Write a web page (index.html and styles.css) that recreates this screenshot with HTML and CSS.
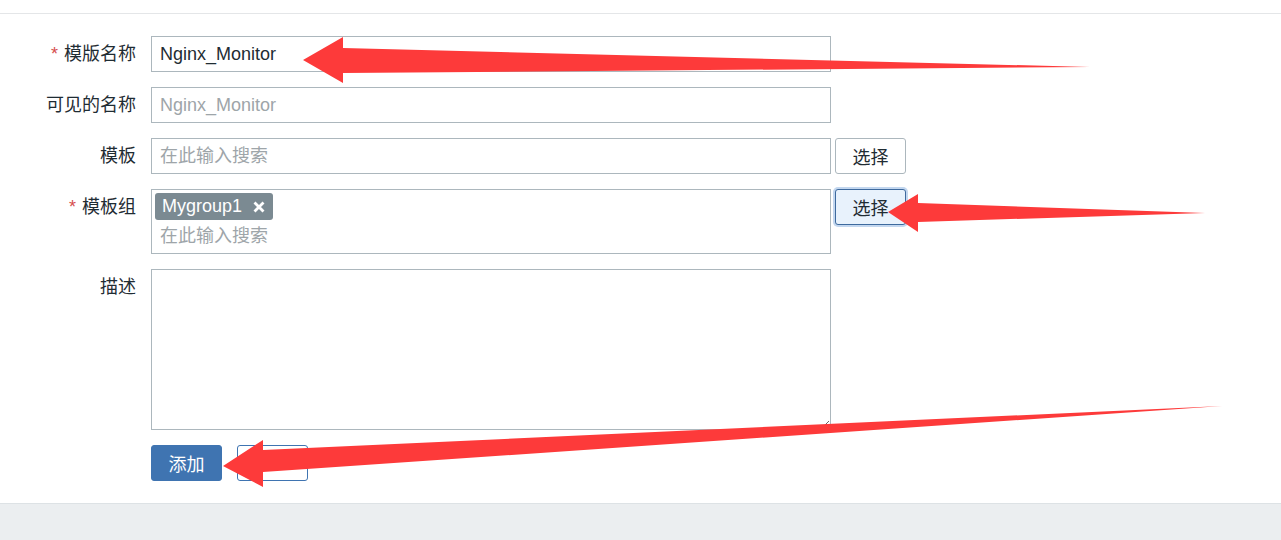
FILE: index.html
```html
<!DOCTYPE html>
<html lang="zh-CN">
<head>
    <meta charset="UTF-8">
    <title>模板</title>
    <link rel="stylesheet" href="styles.css">
</head>
<body>
    <div class="topbar"></div>
    <div class="panel">
        <form class="form">
            <label class="label" for="name"><span class="req">*</span>模版名称</label>
            <div class="field">
                <input type="text" id="name" class="input" value="Nginx_Monitor">
            </div>

            <label class="label" for="visible">可见的名称</label>
            <div class="field">
                <input type="text" id="visible" class="input" placeholder="Nginx_Monitor">
            </div>

            <label class="label" for="templates">模板</label>
            <div class="field">
                <input type="text" id="templates" class="input" placeholder="在此输入搜索">
                <button type="button" class="btn-alt">选择</button>
            </div>

            <label class="label" for="groups"><span class="req">*</span>模板组</label>
            <div class="field">
                <div class="multiselect">
                    <span class="tag">Mygroup1
                        <svg class="tag-x" width="12" height="12" viewBox="0 0 12 12">
                            <path d="M1.5 1.5 L10.5 10.5 M10.5 1.5 L1.5 10.5" />
                        </svg>
                    </span>
                    <input type="text" id="groups" class="ms-search" placeholder="在此输入搜索">
                </div>
                <button type="button" class="btn-alt focused">选择</button>
            </div>

            <label class="label" for="desc">描述</label>
            <div class="field">
                <textarea id="desc" class="textarea"></textarea>
            </div>

            <div></div>
            <div class="actions">
                <button type="button" class="btn-main">添加</button>
                <button type="button" class="btn-cancel"></button>
            </div>
        </form>
    </div>

    <!-- annotation arrows drawn over the screenshot -->
    <svg class="arrows" width="1281" height="540" viewBox="0 0 1281 540">
        <polygon points="303,60 343,37 343,48 1090,67 343,73 343,83" />
        <polygon points="888,212 918,194 918,203 1205,213 918,222 918,232" />
        <polygon points="223,466 263,440 263,450 1222,406 263,472 263,487" />
    </svg>
</body>
</html>
```

FILE: styles.css
```css
body {
    margin: 0;
    background-color: #ebeef0;
    font-family: 'Liberation Sans', 'Noto Sans CJK SC', sans-serif;
    font-size: 18px;
    color: #1f2c33;
    position: relative;
    min-height: 540px;
}
.topbar {
    height: 13px;
    background-color: #ffffff;
    border-bottom: 1px solid #e4e6e8;
}
.panel {
    background-color: #ffffff;
    padding: 22px 0 22px 0;
    border-bottom: 1px solid #dde2e5;
}
.form {
    display: grid;
    grid-template-columns: 136px 1fr;
    column-gap: 15px;
    row-gap: 15px;
}
.label {
    text-align: right;
    line-height: 36px;
    white-space: nowrap;
}
.req {
    color: #d64e4e;
    margin-right: 6px;
}
.field {
    display: flex;
    gap: 4px;
    align-items: flex-start;
}
.input {
    width: 680px;
    height: 36px;
    box-sizing: border-box;
    border: 1px solid #acb7bd;
    padding: 0 8px;
    font-family: 'Liberation Sans', 'Noto Sans CJK SC', sans-serif;
    font-size: 18px;
    color: #1f2c33;
    outline: none;
    margin: 0;
}
.input::placeholder, .ms-search::placeholder {
    color: #9ea5a9;
}
.btn-alt {
    width: 71px;
    height: 36px;
    box-sizing: border-box;
    background-color: #ffffff;
    border: 1px solid #acb7bd;
    border-radius: 3px;
    font-family: 'Liberation Sans', 'Noto Sans CJK SC', sans-serif;
    font-size: 18px;
    color: #1f2c33;
    padding: 0;
    margin: 0;
}
.btn-alt.focused {
    background-color: #e8f2fc;
    border-color: #3e6a9e;
    box-shadow: 0 0 0 2px #c3d7ef;
}
.multiselect {
    width: 680px;
    height: 65px;
    box-sizing: border-box;
    border: 1px solid #acb7bd;
    padding: 3px;
    display: flex;
    flex-direction: column;
    align-items: flex-start;
}
.tag {
    display: flex;
    align-items: center;
    height: 27px;
    padding: 0 8px 0 7px;
    background-color: #7b8a92;
    color: #ffffff;
    border-radius: 3px;
    line-height: 27px;
}
.tag-x {
    margin-left: 11px;
    stroke: #ffffff;
    stroke-width: 2.8;
    fill: none;
}
.ms-search {
    border: none;
    outline: none;
    height: 28px;
    width: 100%;
    box-sizing: border-box;
    padding: 0 0 0 5px;
    margin: 2px 0 0 0;
    font-family: 'Liberation Sans', 'Noto Sans CJK SC', sans-serif;
    font-size: 18px;
}
.textarea {
    width: 680px;
    height: 161px;
    box-sizing: border-box;
    border: 1px solid #acb7bd;
    margin: 0;
    padding: 6px 8px;
    font-family: 'Liberation Sans', 'Noto Sans CJK SC', sans-serif;
    font-size: 18px;
    outline: none;
    display: block;
}
.actions {
    display: flex;
    gap: 15px;
}
.btn-main, .btn-cancel {
    width: 71px;
    height: 36px;
    box-sizing: border-box;
    border-radius: 3px;
    font-family: 'Liberation Sans', 'Noto Sans CJK SC', sans-serif;
    font-size: 18px;
    padding: 0;
    margin: 0;
}
.btn-main {
    background-color: #3f74b1;
    border: 1px solid #3f74b1;
    color: #ffffff;
}
.btn-cancel {
    background-color: #ffffff;
    border: 1px solid #3f74b1;
    color: #3f74b1;
}
.arrows {
    position: absolute;
    top: 0;
    left: 0;
    pointer-events: none;
}
.arrows polygon {
    fill: #fd3a3a;
}
```
